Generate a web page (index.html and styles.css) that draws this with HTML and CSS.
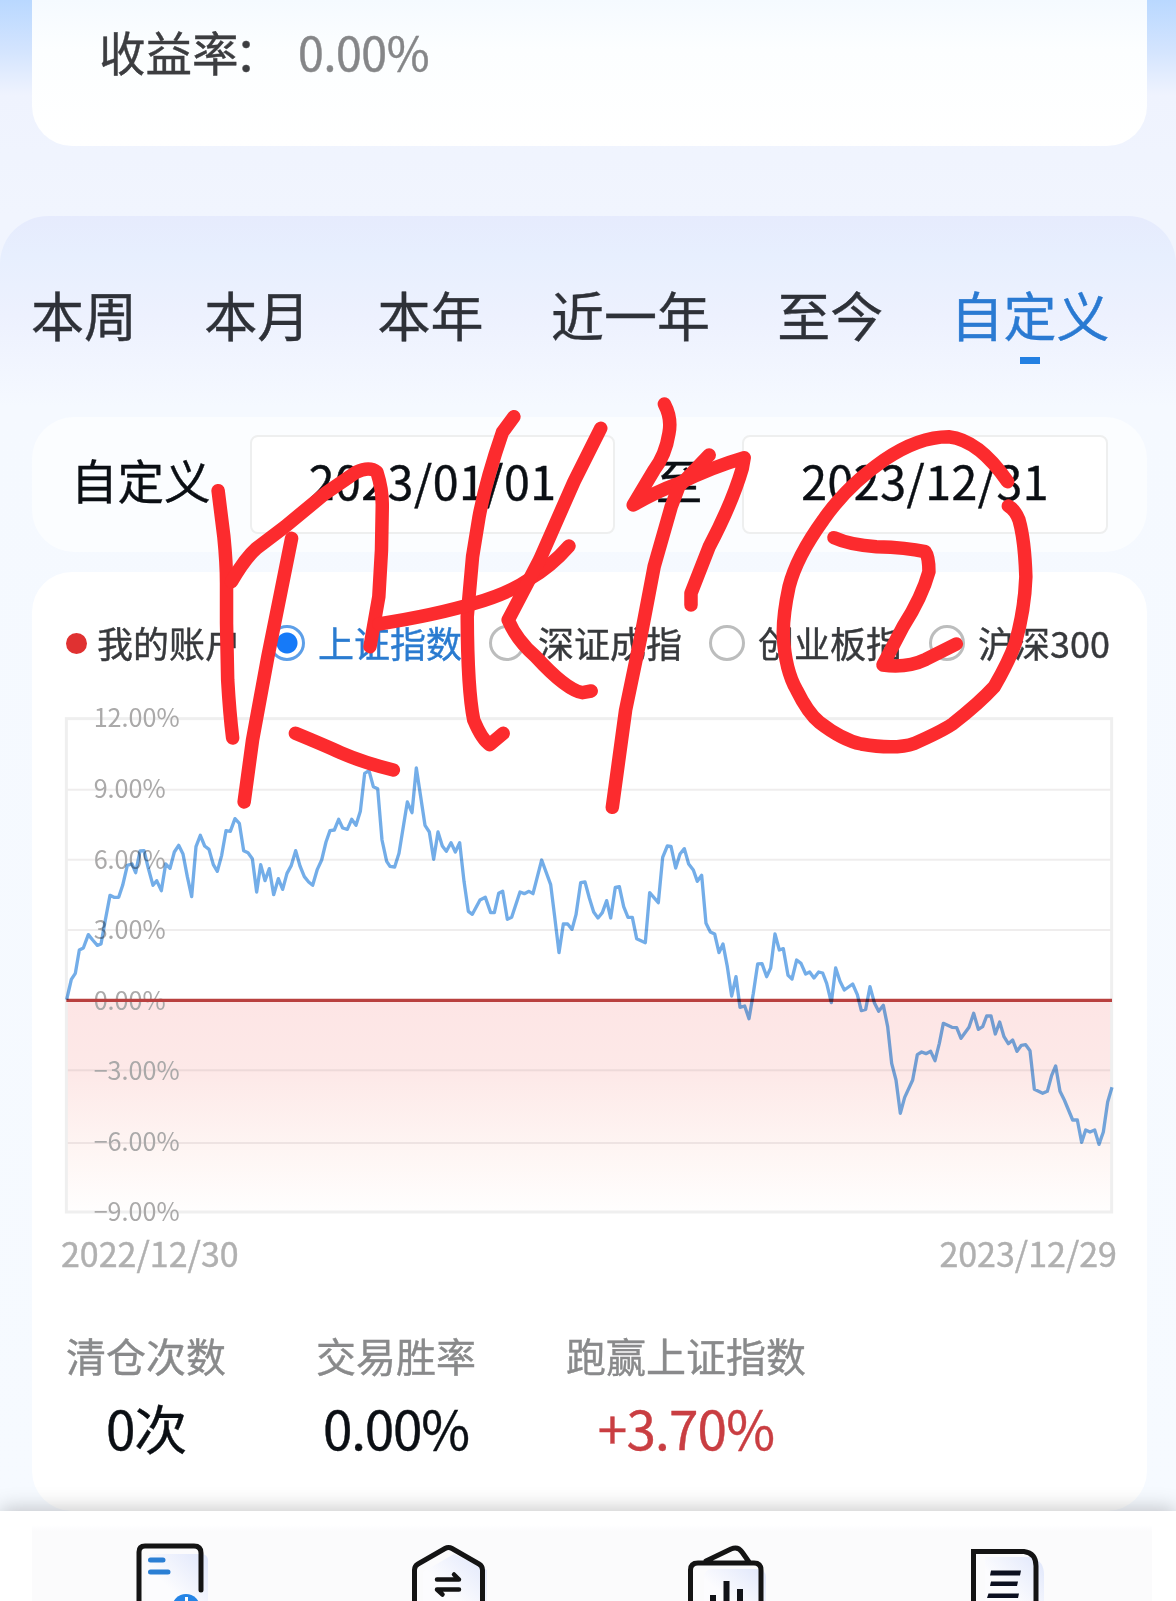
FILE: index.html
```html
<!DOCTYPE html>
<html lang="zh-CN">
<head>
<meta charset="utf-8">
<title>账户收益分析</title>
<link rel="stylesheet" href="styles.css">
</head>
<body>
<main class="page">
  <section class="summary">
    <span class="summary-label">收益率<span class="colon">：</span></span><span class="summary-value">0.00%</span>
  </section>

  <section class="panel">
    <nav class="tabs">
      <a class="tab">本周</a><a class="tab">本月</a><a class="tab">本年</a><a class="tab">近一年</a><a class="tab">至今</a><a class="tab active">自定义</a>
    </nav>

    <div class="range">
      <span class="range-title">自定义</span>
      <span class="date-box">2023/01/01</span>
      <span class="range-to">至</span>
      <span class="date-box">2023/12/31</span>
    </div>

    <div class="card">
      <div class="legend">
        <span class="account"><i class="dot"></i>我的账户</span>
        <span class="option selected"><i class="radio"></i>上证指数</span>
        <span class="option"><i class="radio"></i>深证成指</span>
        <span class="option"><i class="radio"></i>创业板指</span>
        <span class="option"><i class="radio"></i>沪深300</span>
      </div>

      <svg class="chart" viewBox="0 0 3228 1560">
        <defs>
          <linearGradient id="loss" x1="0" y1="0" x2="0" y2="1">
            <stop offset="0" stop-color="#fde5e5"/>
            <stop offset=".35" stop-color="#fde9e8"/>
            <stop offset=".7" stop-color="#fef5f3"/>
            <stop offset="1" stop-color="#fffefe"/>
          </linearGradient>
        </defs>
        <rect x="49" y="901" width="3136" height="635" fill="url(#loss)"/>
        <path class="grid" d="M49 269H3185M49 479H3185M49 690H3185M49 1111H3185M49 1329H3185"/>
        <rect class="frame" x="49" y="56" width="3136" height="1480"/>
        <g class="scale">
          <text x="131" y="81">12.00%</text>
          <text x="131" y="294">9.00%</text>
          <text x="131" y="506">6.00%</text>
          <text x="131" y="717">3.00%</text>
          <text x="131" y="929">0.00%</text>
          <text x="131" y="1139">−3.00%</text>
          <text x="131" y="1352">−6.00%</text>
          <text x="131" y="1562">−9.00%</text>
        </g>
        <path class="zero" d="M49 901H3186"/>
        <polyline class="index-line" points="50,899 64,838 76,820 88,750 100,744 115,704 128,720 142,736 153,732 166,660 180,586 192,592 206,592 218,556 232,496 246,492 257,518 270,453 282,452 295,505 309,556 320,542 334,572 347,492 360,505 373,456 386,436 399,462 412,530 425,590 438,440 451,406 464,438 477,448 490,494 502,514 515,466 528,392 541,394 555,356 568,370 581,452 594,458 607,476 620,576 632,494 645,542 658,506 671,584 685,536 698,568 711,520 724,496 737,452 750,498 763,530 776,546 788,556 802,508 815,480 828,426 840,392 853,390 866,358 878,384 892,388 905,358 918,376 931,334 944,220 957,212 970,260 983,266 996,420 1010,484 1020,499 1034,501 1047,460 1072,306 1086,338 1099,204 1125,376 1138,396 1151,478 1164,396 1177,438 1189,454 1203,428 1216,456 1229,428 1242,544 1255,634 1267,643 1290,600 1306,592 1322,638 1333,638 1346,580 1358,574 1372,658 1385,652 1410,576 1423,581 1437,574 1449,581 1475,480 1502,554 1514,650 1527,758 1540,672 1553,672 1566,688 1578,644 1592,548 1605,546 1618,594 1631,636 1644,654 1657,638 1670,602 1682,654 1696,562 1708,560 1721,620 1734,652 1747,652 1760,716 1786,728 1799,578 1825,608 1838,472 1852,438 1863,439 1877,504 1890,462 1903,446 1916,492 1930,510 1942,544 1955,526 1968,670 1981,696 1994,702 2007,758 2019,732 2032,800 2045,888 2058,830 2070,922 2084,918 2097,956 2110,880 2123,792 2136,791 2150,830 2162,804 2175,702 2188,750 2200,746 2214,826 2226,837 2240,780 2253,790 2267,822 2279,816 2292,834 2306,816 2318,819 2330,850 2344,908 2357,804 2370,844 2383,870 2408,852 2422,884 2434,932 2447,928 2460,860 2473,908 2486,934 2500,916 2513,980 2525,1090 2538,1140 2551,1240 2564,1192 2588,1140 2602,1064 2615,1056 2628,1061 2642,1054 2655,1082 2668,1030 2680,970 2706,982 2720,983 2733,1015 2757,982 2771,940 2785,988 2798,980 2810,948 2823,948 2836,1002 2849,966 2862,1010 2875,1031 2888,1020 2901,1054 2914,1036 2927,1034 2940,1052 2953,1168 2978,1180 2992,1174 3005,1126 3017,1098 3030,1174 3043,1200 3068,1260 3082,1260 3095,1327 3107,1290 3120,1296 3134,1290 3147,1333 3160,1296 3173,1206 3186,1162"/>
      </svg>
      <div class="period"><span>2022/12/30</span><span>2023/12/29</span></div>

      <div class="stats">
        <div class="stat"><span class="stat-name">清仓次数</span><span class="stat-value">0次</span></div>
        <div class="stat"><span class="stat-name">交易胜率</span><span class="stat-value">0.00%</span></div>
        <div class="stat"><span class="stat-name">跑赢上证指数</span><span class="stat-value up">+3.70%</span></div>
      </div>
    </div>
  </section>

  <footer class="toolbar">
    <div class="toolbar-inner">
      <svg class="tool" viewBox="0 0 90 74">
        <defs><linearGradient id="tint" x1="0" y1="1" x2="1" y2="0"><stop offset=".4" stop-color="#fcfcfe"/><stop offset="1" stop-color="#dfe6fb"/></linearGradient></defs>
        <rect x="18" y="27" width="62" height="60" rx="6" fill="url(#tint)"/>
        <path class="ink" d="M11 80V25Q11 19 17 19H66Q73 19 73 26V63"/>
        <path class="accent" d="M22.500 33H35M22.500 45H40"/>
        <circle cx="58" cy="81" r="14" fill="#2484e6"/><path d="M58.500 70V80" stroke="#fff" stroke-width="3"/>
      </svg>
      <svg class="tool" viewBox="0 0 90 74">
        <path d="M20 45L51 27L84 43V90H20Z" fill="url(#tint)"/>
        <path class="ink" d="M11.500 90V43Q11.500 39 15 37L42 21.500Q45.500 19.500 49 21.500L76 37Q79.500 39 79.500 43V90"/>
        <path d="M34 52.500H56L51 47.500M56 62.500H34L39.500 67.500" class="ink arrows"/>
      </svg>
      <svg class="tool" viewBox="0 0 90 74">
        <rect x="24" y="42" width="62" height="50" rx="8" fill="url(#tint)"/>
        <path class="ink" d="M10.500 90V43Q10.500 36 18 36H74Q81 36 81 43V90M26 34L51 22Q58 19 62 25L69 35"/>
        <path d="M33 68V90M46.500 54V90M60 62V90" stroke="#111318" stroke-width="6"/>
      </svg>
      <svg class="tool" viewBox="0 0 90 74">
        <path d="M25 30H72Q84 34 84 48V90H25Z" fill="url(#tint)"/>
        <path class="ink sharp" d="M13.500 90V24.500H64Q76 26 76 39V90"/>
        <path d="M31 43.500L30 48.500H60L61 43.500ZM31 54.500L30 59H57L58 54.500ZM28.500 66.500L27 71H58L59 66.500Z" fill="#0c1020"/>
      </svg>
    </div>
  </footer>

  <svg class="markup" viewBox="0 0 1176 1601">
    <g transform="matrix(.38265 0 0 .33333 0 390)">
      <path d="M570 302L585 440Q592 520 592 580V700L595 870Q600 970 608 1044"/>
      <path d="M605 575Q640 505 670 475L745 410L850 310L930 247Q965 228 985 246Q1000 300 999 350L997 480L990 620L967 770"/>
      <path d="M762 445L735 600L700 800L660 1050L638 1236"/>
      <path d="M772 1030Q850 1067 890 1088Q950 1118 1028 1140"/>
      <path d="M1343 80L1313 127Q1270 270 1252 380L1235 500L1221 680Q1222 900 1238 990Q1260 1050 1280 1064L1315 1030"/>
      <path d="M990 702Q1140 675 1240 640Q1330 610 1380 570Q1440 530 1487 468"/>
      <path d="M1570 115L1500 275L1410 510L1328 690Q1350 750 1400 800Q1480 900 1522 908L1545 903"/>
    </g>
    <g transform="matrix(.3801 0 0 .33333 580 390)">
      <path d="M222 42Q242 85 234 130Q225 195 195 240L140 345Q200 305 260 280Q350 230 432 203L427 235Q400 340 340 470L292 610V645"/>
      <path d="M340 195L260 290L240 350L195 530L160 740L120 960L85 1252"/>
      <path d="M668 443Q710 465 780 470Q860 472 908 485Q918 500 918 545Q900 620 850 710L797 825Q860 835 910 808L990 762"/>
      <path d="M1125 275Q1050 150 970 140Q890 140 800 210Q700 290 640 390Q570 500 550 590Q533 680 535 740Q540 840 570 900Q600 970 630 997Q690 1050 740 1062Q830 1080 880 1060Q950 1025 980 1002Q1050 940 1090 890Q1130 810 1145 760Q1170 660 1173 560Q1170 450 1155 390Q1145 360 1127 348"/>
    </g>
  </svg>
</main>
</body>
</html>
```
FILE: styles.css
```css
* { box-sizing: border-box; }

body {
  margin: 0;
  font-family: "Noto Sans CJK SC", sans-serif;
  color: #0b0f14;
  -webkit-text-stroke: .4px currentColor;
}

.page {
  position: relative;
  display: flex;
  flex-direction: column;
  width: 1176px;
  height: 1601px;
  overflow: hidden;
  background: linear-gradient(#b9d8ff 0, #d3e4fe 50px, #eff3fe 95px, #f1f5fe 216px);
}

.summary {
  display: flex;
  align-items: center;
  flex: none;
  height: 146px;
  margin: 0 29px 0 32px;
  padding: 0 0 45px 67px;
  border-radius: 0 0 40px 40px;
  background: linear-gradient(#f5faff, #fcfeff 50px, #fff);
  font-size: 46.500px;
  line-height: 101px;
}
.summary-label { width: 199px; color: #3c3d40; white-space: nowrap; }
.colon { margin-left: -4px; }
.summary-value { color: #858688; letter-spacing: -.4px; }

.panel {
  display: flex;
  flex-direction: column;
  flex: none;
  height: 1295px;
  margin-top: 70px;
  border-radius: 48px 48px 0 0;
  background: linear-gradient(#e6ebfd 0, #e7effe 40px, #edf1fe 100px, #f5f9ff 190px, #f6faff 100%);
}

.tabs {
  display: flex;
  gap: 67.3px;
  height: 201px;
  padding: 66px 0 0 31px;
  font-size: 53px;
  line-height: 64px;
  color: #2e3138;
}
.tab { white-space: nowrap; }
.tab.active {
  display: flex;
  flex-direction: column;
  align-items: center;
  color: #2a7ad2;
}
.tab.active::after {
  content: "";
  width: 20px;
  height: 7px;
  margin-top: 11px;
  background: #2380e2;
}

.range {
  display: flex;
  align-items: center;
  height: 135px;
  margin: 0 29px 0 32px;
  padding: 0 39px 0 39px;
  border-radius: 42px;
  background: #fbfdff;
  font-size: 46.500px;
}
.range-title, .range-to { line-height: 60px; padding-bottom: 12px; }
.range-title { width: 179px; }
.date-box {
  width: 366px;
  height: 99px;
  border: 2px solid #eeefef;
  border-radius: 8px;
  background: #fff;
  text-align: center;
  line-height: 86px;
  letter-spacing: .5px;
}
.range-to { width: 127px; text-align: center; }

.card {
  display: flex;
  flex-direction: column;
  flex: 1;
  margin: 20px 29px 0 32px;
  border-radius: 40px;
  background: #fff;
}

.legend {
  display: flex;
  align-items: center;
  height: 128px;
  padding: 14px 0 0 34px;
  font-size: 36px;
  line-height: 50px;
  color: #37393c;
  white-space: nowrap;
}
.account, .option { display: flex; flex: none; align-items: center; height: 50px; padding-bottom: 3px; }
.account { width: 203px; }
.option { width: 220px; }
.option:last-child { width: auto; }
.dot {
  position: relative;
  top: 2px;
  width: 21px;
  height: 21px;
  margin-right: 10px;
  border-radius: 50%;
  background: #e03131;
}
.radio {
  position: relative;
  top: 1px;
  width: 36px;
  height: 36px;
  margin-right: 13px;
  border: 3px solid #bcbdbd;
  border-radius: 50%;
}
.selected { color: #2a7bd0; }
.selected .radio {
  border-color: #5d9fe8;
  background: radial-gradient(circle, #167af8 10px, #fff 11px);
}

.chart {
  flex: none;
  width: 1076px;
  height: 520px;
  margin: 0 0 0 18px;
  overflow: visible;
}
.grid { fill: none; stroke: #9a8f8f; stroke-opacity: .16; stroke-width: 6; }
.frame { fill: none; stroke: #efefef; stroke-width: 9; }
.scale { font-size: 75.500px; fill: #aaa9a9; -webkit-text-stroke: .8px #aaa9a9; }
.zero { stroke: #b9403f; stroke-width: 10; }
.index-line { fill: none; stroke: #5b9fe4; stroke-opacity: .85; stroke-width: 10; stroke-linejoin: round; }
.chart .index-line { mix-blend-mode: multiply; }

.period {
  display: flex;
  justify-content: space-between;
  padding: 0 30px 0 29px;
  margin-top: 8px;
  font-size: 34px;
  line-height: 50px;
  color: #b0b0b0;
}

.stats { display: flex; gap: 90px; margin-top: 50px; padding-left: 34px; }
.stat { display: flex; flex-direction: column; align-items: center; }
.stat-name { font-size: 40px; line-height: 54px; color: #898a8b; }
.stat-value { font-size: 53px; line-height: 66px; margin-top: 12px; letter-spacing: -1.2px; }
.up { color: #c93e42; letter-spacing: -.8px; }

.toolbar {
  position: relative;
  flex: none;
  height: 90px;
  padding: 0 24px 0 32px;
  background: #fff;
  box-shadow: 0 -2px 20px rgba(0, 0, 0, .23);
}
.toolbar-inner {
  display: flex;
  gap: 185px;
  height: 90px;
  padding: 16px 0 0 96px;
  background: linear-gradient(#fff 14px, #fbfbfc 20px);
}
.tool { flex: none; width: 90px; height: 74px; }
.tool:nth-child(3) { margin-left: 2px; }
.tool:nth-child(4) { margin-left: 5px; }
.ink { fill: none; stroke: #141414; stroke-width: 5; stroke-linejoin: round; stroke-linecap: round; }
.ink.sharp { stroke-linejoin: miter; }
.ink.arrows { stroke-width: 4.500px; }
.accent { stroke: #2b7fd4; stroke-width: 5; stroke-linecap: round; }

.markup {
  position: absolute;
  inset: 0;
  width: 1176px;
  height: 1601px;
}
.markup path {
  fill: none;
  stroke: #fc2b2e;
  stroke-width: 13.500px;
  stroke-linecap: round;
  stroke-linejoin: round;
  vector-effect: non-scaling-stroke;
}
```
